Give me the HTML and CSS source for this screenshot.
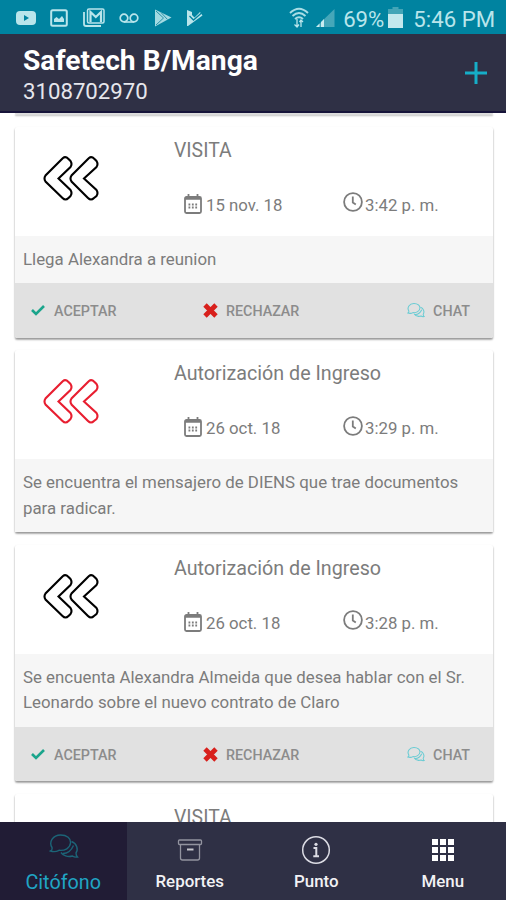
FILE: index.html
```html
<!DOCTYPE html>
<html lang="es">
<head>
    <meta charset="UTF-8">
    <meta name="viewport" content="width=device-width, initial-scale=1.0">
    <title>Safetech</title>
    <link rel="stylesheet" href="styles.css">
</head>
<body>
    <!-- shared icons -->
    <svg class="sprite" width="0" height="0">
        <symbol id="arrows" viewBox="0 0 58 48">
            <path d="M20 3 L2.500 20.5 Q0.500 23.5 2.500 26.5 L19.500 43 Q22.500 46 25.500 43 L27.500 41 Q29.500 38 27.500 35 L15.500 23.5 L27.500 12 Q29.500 9 27.500 6 L25.500 4 Q22.500 1 20 3 Z M46 3 L28.500 20.500 Q26.500 23.500 28.500 26.500 L45 43 Q48 46 51 43 L53.500 41 Q55.500 38 53.500 35 L41 23.500 L53.500 12 Q55.500 9 53.500 6 L51.500 4 Q48.500 1 46 3 Z"/>
        </symbol>
        <symbol id="calendar" viewBox="0 0 20 22">
            <rect x="2" y="4" width="16" height="16" rx="1.500"/>
            <path d="M2 5.800 H18 M5.500 1 V5 M14.500 1 V5"/>
            <path d="M5.500 11.500 H14.500 M5.500 14.500 H14.500" stroke-dasharray="1.800 1.600"/>
        </symbol>
        <symbol id="clock" viewBox="0 0 20 20">
            <circle cx="10" cy="10" r="8.900"/>
            <path d="M9.800 4.500 V10.500 L12.800 12.500"/>
        </symbol>
        <symbol id="chat" viewBox="0 0 30 26">
            <path d="M3 14.500 C-0.500 9 4 2 11.500 2 C18 2 22 5.500 21.500 10 C21 15 16 18 10 17.300 Q6 19.500 1.500 18 Q3.500 17 3 14.500 Z"/>
            <path d="M22.500 8.500 C28 10.500 29.500 16.500 27 20 Q27 22.500 28.500 24 Q25.500 24.500 23.500 23 C18.500 24.500 14 22.500 12 19.500 M14 20.500 Q21 20.500 24.500 12.500"/>
        </symbol>
    </svg>

    <div class="status-bar">
        <div class="notifications">
            <svg width="20" height="14" viewBox="0 0 20 14"><rect width="20" height="14" rx="4" fill="#b9e5eb"/><path d="M8 4 L13 7 L8 10 Z" fill="#0083a0"/></svg>
            <svg width="18" height="18" viewBox="0 0 18 18"><rect x="1.200" y="1.200" width="15.600" height="15.600" rx="1.500" fill="none" stroke="#b9e5eb" stroke-width="2"/><path d="M4 13 V10 L6.500 8 L9 10 L12 7 L14 10 V13 Z" fill="#b9e5eb"/></svg>
            <svg width="22" height="19" viewBox="0 0 22 19"><path d="M1 4 V16 Q1 18 3 18 H18" fill="none" stroke="#b9e5eb" stroke-width="1.800"/><rect x="4.500" y="1" width="16.500" height="14" rx="1.500" fill="none" stroke="#b9e5eb" stroke-width="1.500"/><path d="M7.500 14 V4 L12.800 9 L18 4 V14" fill="none" stroke="#b9e5eb" stroke-width="2.200"/></svg>
            <svg width="20" height="10" viewBox="0 0 20 10"><path d="M5 9 H15" stroke="#b9e5eb" stroke-width="1.600"/><circle cx="5" cy="5" r="3.800" fill="none" stroke="#b9e5eb" stroke-width="1.700"/><circle cx="15" cy="5" r="3.800" fill="none" stroke="#b9e5eb" stroke-width="1.700"/></svg>
            <svg width="18" height="18" viewBox="0 0 18 18"><path d="M1 0.500 L17.500 8.500 L1 17.500 Z" fill="#a3dae2"/><path d="M2 2 L9.500 9 L2 16 M7 3.500 L13.500 10.500" fill="none" stroke="#2b93a9" stroke-width="1"/></svg>
            <svg width="17" height="18" viewBox="0 0 17 18"><path d="M1 1 L6 3 V6 L8.500 8.500 L14 3 L16.500 6.500 L2 17 H1 Z" fill="#b9e5eb"/><path d="M3.500 7 L7.500 11 L15.500 4" fill="none" stroke="#0083a0" stroke-width="1.300"/></svg>
        </div>
        <div class="system">
            <svg class="wifi" width="20" height="21" viewBox="0 0 20 21"><path d="M1 6 Q10 -2.500 19 6 M3.500 9 Q10 3 16.500 9 M6 12 Q10 8.500 14 12" fill="none" stroke="#a9dde5" stroke-width="1.900"/><path d="M8 12 V20 M5.500 17.500 L8 20 L10 17.500 M12 20 V13 M10.500 15 L12 13 L14 15" fill="none" stroke="#b9e5eb" stroke-width="1.300"/></svg>
            <svg class="signal" width="19" height="18" viewBox="0 0 19 18"><path d="M18.500 0 V18 H0 Z" fill="#46a7b9"/><path d="M8 10 V18 H5 V13 Z M3.500 14.500 V18 H0 Z" fill="#c9ecf0"/></svg>
            <span class="battery-text">69%</span>
            <svg class="battery" width="15" height="21" viewBox="0 0 15 21"><path d="M4.500 0 H10.500 V2 H15 V8 H0 V2 H4.500 Z" fill="#43a5b7"/><path d="M0 7 H15 V21 H0 Z" fill="#c3e8ed"/></svg>
            <span class="time">5:46 PM</span>
        </div>
    </div>

    <div class="header">
        <div>
            <div class="site">Safetech B/Manga</div>
            <div class="phone">3108702970</div>
        </div>
        <svg class="add" width="24" height="24" viewBox="0 0 24 24"><path d="M12 1 V23 M1 12 H23" stroke="#16aec8" stroke-width="3"/></svg>
    </div>

    <div class="list">
        <div class="card card-end"></div>

        <div class="card">
            <div class="card-head">
                <div class="direction"><svg class="arrows" width="58" height="48"><use href="#arrows"/></svg></div>
                <div class="details">
                    <div class="title visit">VISITA</div>
                    <div class="when">
                        <div class="date"><svg class="line-icon" width="20" height="22"><use href="#calendar"/></svg><span>15 nov. 18</span></div>
                        <div class="hour"><svg class="line-icon" width="20" height="20"><use href="#clock"/></svg><span>3:42 p. m.</span></div>
                    </div>
                </div>
            </div>
            <div class="message">Llega Alexandra a reunion</div>
            <div class="actions">
                <div class="accept"><svg width="14" height="12" viewBox="0 0 14 12"><path d="M1 6 L5 10 L13 2" fill="none" stroke="#1ba58c" stroke-width="2.600"/></svg><span>ACEPTAR</span></div>
                <div class="reject"><svg width="15" height="15" viewBox="0 0 15 15"><path d="M2 2 L13 13 M13 2 L2 13" stroke="#d8201c" stroke-width="4.800"/></svg><span>RECHAZAR</span></div>
                <div class="talk"><svg class="chat-small" width="18" height="16"><use href="#chat"/></svg><span>CHAT</span></div>
            </div>
        </div>

        <div class="card">
            <div class="card-head">
                <div class="direction"><svg class="arrows denied" width="58" height="48"><use href="#arrows"/></svg></div>
                <div class="details">
                    <div class="title">Autorización de Ingreso</div>
                    <div class="when">
                        <div class="date"><svg class="line-icon" width="20" height="22"><use href="#calendar"/></svg><span>26 oct. 18</span></div>
                        <div class="hour"><svg class="line-icon" width="20" height="20"><use href="#clock"/></svg><span>3:29 p. m.</span></div>
                    </div>
                </div>
            </div>
            <div class="message">Se encuentra el mensajero de DIENS que trae documentos<br>para radicar.</div>
        </div>

        <div class="card">
            <div class="card-head">
                <div class="direction"><svg class="arrows" width="58" height="48"><use href="#arrows"/></svg></div>
                <div class="details">
                    <div class="title">Autorización de Ingreso</div>
                    <div class="when">
                        <div class="date"><svg class="line-icon" width="20" height="22"><use href="#calendar"/></svg><span>26 oct. 18</span></div>
                        <div class="hour"><svg class="line-icon" width="20" height="20"><use href="#clock"/></svg><span>3:28 p. m.</span></div>
                    </div>
                </div>
            </div>
            <div class="message">Se encuenta Alexandra Almeida que desea hablar con el Sr.<br>Leonardo sobre el nuevo contrato de Claro</div>
            <div class="actions">
                <div class="accept"><svg width="14" height="12" viewBox="0 0 14 12"><path d="M1 6 L5 10 L13 2" fill="none" stroke="#1ba58c" stroke-width="2.600"/></svg><span>ACEPTAR</span></div>
                <div class="reject"><svg width="15" height="15" viewBox="0 0 15 15"><path d="M2 2 L13 13 M13 2 L2 13" stroke="#d8201c" stroke-width="4.800"/></svg><span>RECHAZAR</span></div>
                <div class="talk"><svg class="chat-small" width="18" height="16"><use href="#chat"/></svg><span>CHAT</span></div>
            </div>
        </div>

        <div class="card">
            <div class="card-head">
                <div class="direction"></div>
                <div class="details">
                    <div class="title visit">VISITA</div>
                </div>
            </div>
        </div>
    </div>

    <div class="tabs">
        <div class="tab active">
            <div class="tab-icon"><svg class="chat-big" width="30" height="26"><use href="#chat"/></svg></div>
            <div class="tab-label">Citófono</div>
        </div>
        <div class="tab">
            <div class="tab-icon"><svg width="26" height="24" viewBox="0 0 26 24" fill="none" stroke="#92939f" stroke-width="1.300"><rect x="1.500" y="2" width="23" height="4.500" rx="1"/><path d="M3.500 6.500 V20 Q3.500 22 5.500 22 H20.500 Q22.500 22 22.500 20 V6.500"/><path d="M10 11.500 H16.500" stroke="#c5c5cc" stroke-width="2"/></svg></div>
            <div class="tab-label">Reportes</div>
        </div>
        <div class="tab">
            <div class="tab-icon"><svg width="30" height="30" viewBox="0 0 30 30" fill="none" stroke="#dcdce4"><circle cx="15" cy="15" r="13.300" stroke-width="1.500"/><circle cx="15" cy="9.300" r="1.600" fill="#dcdce4" stroke="none"/><path d="M12.500 13 H15.300 V21 M12.300 21.300 H18" stroke-width="2"/></svg></div>
            <div class="tab-label">Punto</div>
        </div>
        <div class="tab">
            <div class="tab-icon"><svg width="22" height="22" viewBox="0 0 22 22" fill="#fff"><path d="M0 0h6v6h-6z M8 0h6v6h-6z M16 0h6v6h-6z M0 8h6v6h-6z M8 8h6v6h-6z M16 8h6v6h-6z M0 16h6v6h-6z M8 16h6v6h-6z M16 16h6v6h-6z"/></svg></div>
            <div class="tab-label">Menu</div>
        </div>
    </div>
</body>
</html>
```
FILE: styles.css
```css
*{
    margin: 0;
    padding: 0;
    box-sizing: border-box;
    font-family: Roboto, sans-serif;
}
body{
    display: flex;
    flex-direction: column;
    height: 100vh;
    overflow: hidden;
    background-color: #fff;
}
svg{
    display: block;
    flex-shrink: 0;
}
.sprite{
    position: absolute;
}
.status-bar{
    height: 34px;
    flex-shrink: 0;
    background-color: #0083a0;
    display: flex;
    align-items: center;
    justify-content: space-between;
    padding: 1px 11px 0 16px;
}
.notifications{
    display: flex;
    align-items: center;
    gap: 14.4px;
}
.system{
    display: flex;
    align-items: center;
    color: #b9e5eb;
    font-size: 22.2px;
    white-space: nowrap;
}
.battery-text{
    padding-top: 2px;
}
.time{
    padding-top: 2px;
}
.wifi{
    margin-right: 7px;
}
.signal{
    margin-right: 8px;
}
.battery{
    margin: 0 10px 0 4px;
}
.header{
    height: 79px;
    flex-shrink: 0;
    background-color: #2f3045;
    border-bottom: 2px solid #17143a;
    display: flex;
    justify-content: space-between;
    padding: 11px 18px 0 23px;
}
.site{
    font-size: 28.2px;
    font-weight: 700;
    line-height: 32px;
    color: #fff;
}
.phone{
    font-size: 22.2px;
    line-height: 28px;
    color: #e6e6ec;
}
.add{
    margin-top: 16px;
}
.list{
    flex: 1;
    min-height: 0;
    overflow: hidden;
    display: flex;
    flex-direction: column;
    gap: 12.5px;
    padding: 0 13px 0 15px;
}
.card{
    flex-shrink: 0;
    border-radius: 2px;
    background-color: #fff;
    box-shadow: 0 2px 2px rgba(0, 0, 0, 0.28), 0 1px 2px rgba(0, 0, 0, 0.2);
}
.card-end{
    height: 1px;
    background-color: #ddd;
}
.card-head{
    height: 109px;
    display: flex;
}
.direction{
    width: 159px;
    padding: 28px 0 0 28px;
}
.arrows{
    fill: none;
    stroke: #000;
    stroke-width: 2.1;
}
.arrows.denied{
    stroke: #e81e30;
}
.details{
    flex: 1;
    padding-top: 11px;
    color: #7c7c7c;
}
.title{
    font-size: 19.7px;
    line-height: 26px;
}
.visit{
    font-size: 19.4px;
}
.when{
    display: flex;
    padding: 27px 0 0 9px;
    font-size: 16.8px;
    line-height: 24px;
}
.date, .hour{
    display: flex;
    align-items: center;
    gap: 3px;
}
.date{
    width: 160px;
}
.hour{
    gap: 2px;
}
.when span{
    padding-top: 2px;
}
.line-icon{
    fill: none;
    stroke: #7c7c7c;
    stroke-width: 1.8;
}
.hour .line-icon{
    margin-top: -3px;
}
.message{
    background-color: #f6f6f6;
    padding: 11px 8px;
    font-size: 16.85px;
    line-height: 25.6px;
    color: #7c7c7c;
    white-space: nowrap;
}
.actions{
    height: 54.5px;
    background-color: #e1e1e1;
    border-radius: 0 0 2px 2px;
    display: flex;
    align-items: center;
    padding: 0 23px 0 16px;
    font-size: 14.3px;
    font-weight: 500;
    color: #8c8c8c;
}
.actions>div{
    display: flex;
    align-items: center;
    gap: 8px;
}
.actions span{
    padding-top: 2px;
}
.actions .accept{
    width: 172px;
    gap: 9px;
}
.talk{
    margin-left: auto;
}
.chat-small{
    fill: none;
    stroke: #67cbd3;
    stroke-width: 1.7;
}
.tabs{
    height: 78px;
    flex-shrink: 0;
    background-color: #2f3045;
    display: flex;
}
.tab{
    flex: 1;
    display: flex;
    flex-direction: column;
    align-items: center;
    padding-top: 11px;
}
.tab.active{
    background-color: #211c35;
}
.tab-icon{
    height: 33px;
    display: flex;
    align-items: center;
}
.active .tab-icon{
    align-items: flex-start;
    padding-left: 2px;
}
.tab-label{
    font-size: 16.9px;
    font-weight: 500;
    line-height: 31px;
    color: #f2f2f5;
}
.active .tab-label{
    font-size: 19.8px;
    font-weight: 400;
    padding-top: 1px;
    color: #20a5c4;
}
.chat-big{
    fill: none;
    stroke: #1c6477;
    stroke-width: 1.4;
}
```
